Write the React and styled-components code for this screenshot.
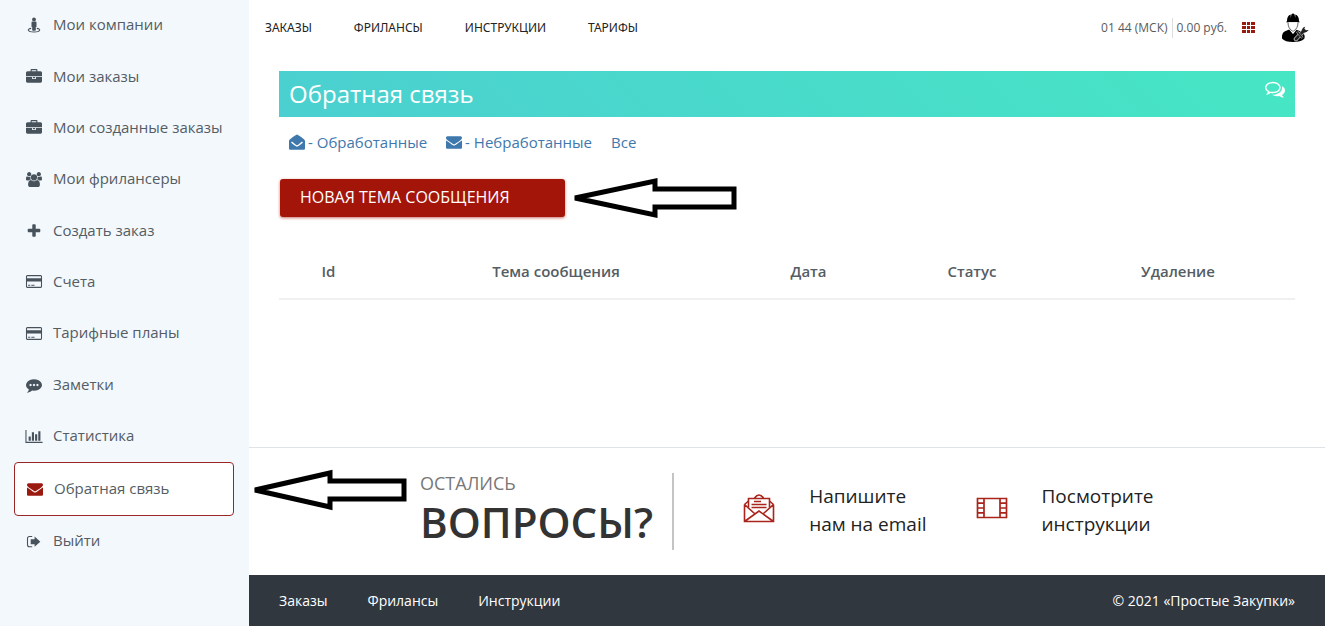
import styled, { createGlobalStyle, css } from "styled-components"

const GlobalStyle = createGlobalStyle`
  * {
    box-sizing: border-box;
  }
  body {
    margin: 0;
    background: #fff;
    color: #545d64;
    font-family: "Open Sans", "Noto Sans", sans-serif;
    font-size: 15px;
    line-height: 20px;
  }
  a {
    color: inherit;
    text-decoration: none;
  }
  ul {
    list-style: none;
    margin: 0;
    padding: 0;
  }
`

const Page = styled.div`
  display: flex;
  min-height: 100vh;
`

const Sidebar = styled.nav`
  flex: 0 0 249px;
  display: flex;
  flex-direction: column;
  padding: 0 15px 59px 14px;
  background: #f3f8fd;
`
const SideList = styled.ul`
  flex: 1;
  display: flex;
  flex-direction: column;
`
const SideItem = styled.li`
  flex: 1 0 51px;
  display: flex;
  ${({ $active }) => $active && css`flex-basis: 53px;`}
`
const SideLink = styled.a`
  flex: 1;
  display: flex;
  align-items: center;
  gap: 9px;
  padding: 0 10px 3px;
  svg {
    flex: 0 0 20px;
    margin-top: 2px;
    fill: #47525b;
  }
  ${({ $active }) => $active && css`
    padding-bottom: 2px;
    background: #fff;
    border: 1px solid #9a2626;
    border-radius: 4px;
    svg {
      fill: #9b1a10;
    }
  `}
`

const Content = styled.div`
  flex: 1;
  min-width: 0;
  display: flex;
  flex-direction: column;
`

const Header = styled.header`
  display: flex;
  align-items: center;
  justify-content: space-between;
  height: 55px;
  padding: 0 16px;
  color: #222;
  font-size: 12px;
`
const TopMenu = styled.ul`
  display: flex;
  gap: 42px;
  font-family: "Noto Sans", sans-serif;
  text-transform: uppercase;
`
const UserBar = styled.div`
  display: flex;
  align-items: center;
  color: #5a5a5a;
`
const Balance = styled.span`
  margin-left: 4px;
  padding-left: 4px;
  border-left: 1px solid #ddd;
`
const IconButton = styled.button`
  display: flex;
  margin: 0;
  padding: 0;
  border: 0;
  background: none;
  cursor: pointer;
`
const GridButton = styled(IconButton)`
  margin: 0 26px 0 15px;
`

const Main = styled.main`
  flex: 1;
  padding: 16px 30px;
`
const TitleBar = styled.div`
  display: flex;
  align-items: flex-start;
  justify-content: space-between;
  padding: 8px 10px;
  background: linear-gradient(45deg, #4bcfd0, #46e6c4);
  color: #fff;
`
const Title = styled.h1`
  margin: 0;
  font-size: 24px;
  line-height: 30px;
  font-weight: 400;
`
const Filters = styled.div`
  display: flex;
  gap: 19px;
  padding: 15px 10px 16px;
  color: #3f78ac;
`
const FilterLink = styled.a`
  display: flex;
  align-items: center;
  gap: 3px;
`
const ActionRow = styled.div`
  display: flex;
  align-items: center;
  gap: 8px;
  padding: 9px 1px 0;
`
const NewTopic = styled.button`
  width: 285px;
  height: 38px;
  padding: 0 20px 2px;
  border: 0;
  border-radius: 3px;
  background: #a31509;
  box-shadow: 0 1px 3px rgba(163, 21, 9, 0.6);
  color: #fff;
  font: 500 16px/20px "Open Sans", "Noto Sans", sans-serif;
  text-align: left;
  text-transform: uppercase;
  cursor: pointer;
`

const Table = styled.table`
  width: 100%;
  margin-top: 25px;
  border-collapse: collapse;
  table-layout: fixed;
`
const Th = styled.th`
  width: ${({ $width }) => $width || "auto"};
  padding: 17px 0;
  border-bottom: 2px solid #f0f0f0;
  font-weight: 600;
`

const Questions = styled.section`
  display: flex;
  align-items: center;
  height: 128px;
  padding: 21px 4px 25px;
  border-top: 1px solid #dfe3e6;
`
const QuestionTitle = styled.h2`
  display: flex;
  flex-direction: column;
  margin: 0 0 0 13px;
  padding-bottom: 4px;
  color: #333;
  font-size: 42px;
  line-height: 50px;
  font-weight: 600;
  small {
    color: #777;
    font-size: 18px;
    line-height: 28px;
    font-weight: 400;
  }
`
const Divider = styled.div`
  align-self: flex-end;
  width: 2px;
  height: 77px;
  margin: 0 69px 0 19px;
  background: #c4c4c4;
`
const HelpLink = styled.a`
  display: flex;
  align-items: center;
  gap: 34px;
  margin-right: 49px;
  color: #222;
  font-size: 19px;
  line-height: 28px;
  svg {
    margin-bottom: 3px;
  }
`
const PageArrow = styled.svg`
  flex: none;
  ${({ $top }) => $top && css`align-self: flex-start;`}
`

const Footer = styled.footer`
  display: flex;
  align-items: center;
  justify-content: space-between;
  height: 51px;
  padding: 0 30px;
  background: #31373f;
  color: #fff;
  font-size: 14px;
`
const FooterMenu = styled.ul`
  display: flex;
  gap: 40px;
`

const ICONS = {
  briefcase: [1792, "M640 256h512v-128h-512v128zm1152 640v480q0 66-47 113t-113 47h-1472q-66 0-113-47t-47-113v-480h672v160q0 26 19 45t45 19h320q26 0 45-19t19-45v-160h672zm-768 0v128h-256v-128h256zm768-480v384h-1792v-384q0-66 47-113t113-47h352v-160q0-40 28-68t68-28h576q40 0 68 28t28 68v160h352q66 0 113 47t47 113z"],
  group: [1920, "M593 896q-162 5-265 128h-134q-82 0-138-40.5t-56-118.5q0-353 124-353 6 0 43.5 21t97.5 42.5 119 21.5q67 0 133-23-5 37-5 66 0 139 81 256zm1071 637q0 120-73 189.5t-194 69.5h-874q-121 0-194-69.5t-73-189.5q0-53 3.5-103.5t14-109 26.5-108.5 43-97.5 62-81 85.5-53.5 111.5-20q10 0 43 21.5t73 48 107 48 135 21.5 135-21.5 107-48 73-48 43-21.5q61 0 111.5 20t85.5 53.5 62 81 43 97.5 26.5 108.5 14 109 3.5 103.5zm-1024-1277q0 106-75 181t-181 75-181-75-75-181 75-181 181-75 181 75 75 181zm704 384q0 159-112.5 271.5t-271.5 112.5-271.5-112.5-112.5-271.5 112.5-271.5 271.5-112.5 271.5 112.5 112.5 271.5zm576 225q0 78-56 118.5t-138 40.5h-134q-103-123-265-128 81-117 81-256 0-29-5-66 66 23 133 23 59 0 119-21.5t97.5-42.5 43.5-21q124 0 124 353zm-128-609q0 106-75 181t-181 75-181-75-75-181 75-181 181-75 181 75 75 181z"],
  plus: [1792, "M1600 736v192q0 40-28 68t-68 28h-416v416q0 40-28 68t-68 28h-192q-40 0-68-28t-28-68v-416h-416q-40 0-68-28t-28-68v-192q0-40 28-68t68-28h416v-416q0-40 28-68t68-28h192q40 0 68 28t28 68v416h416q40 0 68 28t28 68z"],
  card: [1920, "M1760 128q66 0 113 47t47 113v1216q0 66-47 113t-113 47h-1600q-66 0-113-47t-47-113v-1216q0-66 47-113t113-47h1600zm-1600 128q-13 0-22.5 9.5t-9.5 22.5v224h1664v-224q0-13-9.5-22.5t-22.5-9.5h-1600zm1600 1280q13 0 22.5-9.5t9.5-22.5v-608h-1664v608q0 13 9.5 22.5t22.5 9.5h1600zm-1504-128v-128h256v128h-256zm384 0v-128h384v128h-384z"],
  comment: [1792, "M640 896q0-53-37.5-90.5t-90.5-37.5-90.5 37.5-37.5 90.5 37.5 90.5 90.5 37.5 90.5-37.5 37.5-90.5zm384 0q0-53-37.5-90.5t-90.5-37.5-90.5 37.5-37.5 90.5 37.5 90.5 90.5 37.5 90.5-37.5 37.5-90.5zm384 0q0-53-37.5-90.5t-90.5-37.5-90.5 37.5-37.5 90.5 37.5 90.5 90.5 37.5 90.5-37.5 37.5-90.5zm384 0q0 174-120 321.5t-326 233-450 85.5q-110 0-211-18-173 173-435 229-52 10-86 13-12 1-22-6t-13-18q-4-15 20-37 5-5 23.5-21.5t25.5-23.5 23.5-25.5 24-31.5 20.5-37 20-48 14.5-57.5 12.5-72.5q-146-90-229.5-216.5t-83.5-269.5q0-174 120-321.5t326-233 450-85.5 450 85.5 326 233 120 321.5z"],
  chart: [2048, "M640 896v512h-256v-512h256zm384-512v1024h-256v-1024h256zm1024 1152v128h-2048v-1536h128v1408h1920zm-640-896v768h-256v-768h256zm384-384v1152h-256v-1152h256z"],
  envelope: [1792, "M1792 710v794q0 66-47 113t-113 47h-1472q-66 0-113-47t-47-113v-794q44 49 101 87 362 246 497 345 57 42 92.5 65.5t94.5 48 110 24.5h2q51 0 110-24.5t94.5-48 92.5-65.5q170-123 498-345 57-39 100-87zm0-294q0 79-49 151t-122 123q-376 261-468 325-10 7-42.5 31t-54 38.5-52 32.5-57.5 27-50 9h-2q-23 0-50-9t-57.5-27-52-32.5-54-38.5-42.5-31q-91-64-262-182.5t-205-142.5q-62-42-117-115.5t-55-136.5q0-78 41.5-130t118.5-52h1472q65 0 112.5 47t47.5 113z"],
  comments: [1792, "M704 384q-153 0-286 52t-211.5 141-78.5 191q0 82 53 158t149 132l97 56-35 84q34-20 62-39l44-31 53 10q78 14 153 14 153 0 286-52t211.5-141 78.5-191-78.5-191-211.5-141-286-52zm0-128q191 0 353.5 68.5t256.5 186.5 94 257-94 257-256.5 186.5-353.5 68.5q-86 0-176-16-124 88-278 128-36 9-86 16h-3q-11 0-20.5-8t-11.5-21q-1-3-1-6.5t.5-6.5 2-6l2.5-5 3.5-5.5 4-5 4.5-5 4-4.5q5-6 23-25t26-29.5 22.5-29 25-38.5 20.5-44q-124-72-195-177t-71-224q0-139 94-257t256.5-186.5 353.5-68.5zm822 1169q10 24 20.5 44t25 38.5 22.5 29 26 29.5 23 25q1 1 4 4.5t4.5 5 4 5 3.5 5.5l2.5 5 2 6 .5 6.5-1 6.5q-3 14-13 22t-22 7q-50-7-86-16-154-40-278-128-90 16-176 16-271 0-472-132 58 4 88 4 161 0 309-45t264-129q125-92 192-212t67-254q0-77-23-152 129 71 204 178t75 230q0 120-71 224.5t-195 176.5z"],
}

const Icon = ({ name, size = 16 }) => {
  const [width, path] = ICONS[name]
  return (
    <svg width={size} height={size} viewBox={`0 0 ${width} 1792`} fill="currentColor" aria-hidden="true">
      <path d={path} />
    </svg>
  )
}

const StreetIcon = () => (
  <svg width="16" height="16" viewBox="0 0 16 16" aria-hidden="true">
    <circle cx="8" cy="2.4" r="1.9" />
    <path d="M6.5 4.5h3q1 0 1 1.1v3.8q0 .7-.7.7v2.9q0 .7-.7.7H6.9q-.7 0-.7-.7v-2.9q-.7 0-.7-.7V5.6q0-1.100 1-1.100z" />
    <path d="M5.200 11.300C1 11.900 1 15 8 15s7-3.100 2.800-3.700" fill="none" stroke="#47525b" strokeWidth="1.200" />
  </svg>
)

const ExitIcon = () => (
  <svg width="16" height="16" viewBox="0 0 16 16" aria-hidden="true">
    <path d="M6.200 3.500H3.500Q1.500 3.500 1.500 5.500v6.300q0 2 2 2h2.700" fill="none" stroke="#47525b" strokeWidth="1.100" />
    <path d="M8.600 3.600v2.600H4.700v5h3.900v2.600l5.700-5.100z" />
  </svg>
)

const OpenEnvelope = () => (
  <svg width="16" height="16" viewBox="0 0 16 16" fill="currentColor" aria-hidden="true">
    <path d="M8 .5q.6 0 2.600 1.500 4.200 2.900 5 3.900.4.400.4 1v7.600q0 1.200-1.300 1.200H1.300Q0 15.700 0 14.500V6.900q0-.6.400-1 .8-1 5-3.900Q7.400.500 8 .500z" />
    <path d="M2.500 8.100q4.200 3.900 5.500 3.900t5.500-3.900" fill="none" stroke="#fff" strokeWidth="1.400" />
  </svg>
)

const GridIcon = () => (
  <svg width="13" height="11" viewBox="0 0 13 11" fill="#9b1a10" aria-hidden="true">
    {[0, 4, 8].map((y) => [0, 5, 9].map((x) => (
      <rect key={`${x}-${y}`} x={x} y={y} width={x === 5 ? 3 : 4} height="3" />
    )))}
  </svg>
)

const Worker = () => (
  <svg width="28" height="29" viewBox="0 0 28 29" fill="none" aria-hidden="true">
    <path d="M6 8Q6 2.500 9.700 1.500V5l.8-3.800Q12-.4 13.500 1.200L14.300 5V1.500Q18 2.500 18 8l.8 1.200H5.200z" fill="#000" />
    <path d="M7 9.300Q6.800 15.500 12 18.500 17.200 15.500 17 9.300" fill="#fff" stroke="#555" strokeWidth=".9" />
    <path d="M1 25.500Q.6 19.500 4 18.200L8.200 16.500 12 21l3.500-4.300 5.800 2.300q3.400 3 2 6.700Q20 29 12 29T1 25.500z" fill="#000" />
    <path d="M9.200 17.200 12 20.600l2.800-3.400L12 19z" fill="#fff" />
    <path d="m15 26 7.500-8" stroke="#aaa" strokeWidth="4.600" strokeLinecap="round" />
    <path d="m15 26 7.500-8" stroke="#222" strokeWidth="2.600" strokeLinecap="round" />
    <path d="m16 18.500 5.500 6.500" stroke="#aaa" strokeWidth="2.600" />
    <path d="m16 18.500 5.500 6.500" stroke="#222" strokeWidth="1.300" />
    <path d="M24.200 13.800q-3.400.8-3.200 4.400 2.800 3 6.800-1.300l-2.900.4-1.600-1.500z" fill="#222" />
  </svg>
)

const LetterIcon = () => (
  <svg width="32" height="30" viewBox="0 0 32 30" fill="none" stroke="#a9251b" strokeWidth="1.600" aria-hidden="true">
    <path d="M1.500 11.500v17h29v-17M1.500 11.500 5.500 8M30.500 11.500l-4-3.500M1.500 11.500l10 9M30.500 11.500l-10 9M1.500 28.500 16 18l14.500 10.500" />
    <path d="M5.500 14.500v-9h21v9M11.500 5Q16-1 20.500 5M11 8.500h7M8.500 11.500h15M8.500 14.500h15" />
  </svg>
)

const FilmIcon = () => (
  <svg width="32" height="22" viewBox="0 0 32 22" fill="none" stroke="#a9251b" strokeWidth="1.700" aria-hidden="true">
    <path d="M1.500 1.500h29v19h-29zM8 1.500v19M24 1.500v19M1.500 6.200H8M1.500 11H8M1.500 15.800H8M24 6.200h6.500M24 11h6.500M24 15.800h6.500" />
  </svg>
)

const Arrow = ({ width, top }) => (
  <PageArrow $top={top} width={width} height="42" viewBox={`0 0 ${width} 42`} aria-hidden="true">
    <path
      d={`M2 21 ${width * 0.5} 4V12H${width - 3}V30H${width * 0.5}V38z`}
      fill="#fff"
      stroke="#000"
      strokeWidth="5"
    />
  </PageArrow>
)

const sideLinks = [
  { text: "Мои компании", icon: <StreetIcon /> },
  { text: "Мои заказы", icon: <Icon name="briefcase" /> },
  { text: "Мои созданные заказы", icon: <Icon name="briefcase" /> },
  { text: "Мои фрилансеры", icon: <Icon name="group" size={15} /> },
  { text: "Создать заказ", icon: <Icon name="plus" /> },
  { text: "Счета", icon: <Icon name="card" size={15} /> },
  { text: "Тарифные планы", icon: <Icon name="card" size={15} /> },
  { text: "Заметки", icon: <Icon name="comment" /> },
  { text: "Статистика", icon: <Icon name="chart" size={15} /> },
  { text: "Обратная связь", icon: <Icon name="envelope" />, active: true },
  { text: "Выйти", icon: <ExitIcon /> },
]

const topLinks = ["Заказы", "Фрилансы", "Инструкции", "Тарифы"]
const footerLinks = ["Заказы", "Фрилансы", "Инструкции"]

const columns = [
  { text: "Id", width: "99px" },
  { text: "Тема сообщения", width: "356px" },
  { text: "Дата", width: "149px" },
  { text: "Статус", width: "178px" },
  { text: "Удаление" },
]

const App = () => {
  return (
    <>
      <GlobalStyle />
      <Page>
        <Sidebar>
          <SideList>
            {sideLinks.map(({ text, icon, active }) => (
              <SideItem key={text} $active={active}>
                <SideLink href="#" $active={active}>{icon}{text}</SideLink>
              </SideItem>
            ))}
          </SideList>
        </Sidebar>
        <Content>
          <Header>
            <TopMenu>
              {topLinks.map((text) => <li key={text}><a href="#">{text}</a></li>)}
            </TopMenu>
            <UserBar>
              <span>01 44 (МСК)</span>
              <Balance>0.00 руб.</Balance>
              <GridButton type="button" aria-label="Меню"><GridIcon /></GridButton>
              <IconButton type="button" aria-label="Профиль"><Worker /></IconButton>
            </UserBar>
          </Header>
          <Main>
            <TitleBar>
              <Title>Обратная связь</Title>
              <Icon name="comments" size={20} />
            </TitleBar>
            <Filters>
              <FilterLink href="#"><OpenEnvelope />- Обработанные</FilterLink>
              <FilterLink href="#"><Icon name="envelope" />- Небработанные</FilterLink>
              <FilterLink href="#">Все</FilterLink>
            </Filters>
            <ActionRow>
              <NewTopic type="button">Новая тема сообщения</NewTopic>
              <Arrow width={164} />
            </ActionRow>
            <Table>
              <thead>
                <tr>
                  {columns.map(({ text, width }) => <Th key={text} scope="col" $width={width}>{text}</Th>)}
                </tr>
              </thead>
            </Table>
          </Main>
          <Questions>
            <Arrow width={154} top />
            <QuestionTitle><small>ОСТАЛИСЬ</small>ВОПРОСЫ?</QuestionTitle>
            <Divider />
            <HelpLink href="#">
              <LetterIcon />
              <span>Напишите<br />нам на email</span>
            </HelpLink>
            <HelpLink href="#">
              <FilmIcon />
              <span>Посмотрите<br />инструкции</span>
            </HelpLink>
          </Questions>
          <Footer>
            <FooterMenu>
              {footerLinks.map((text) => <li key={text}><a href="#">{text}</a></li>)}
            </FooterMenu>
            <span>© 2021 «Простые Закупки»</span>
          </Footer>
        </Content>
      </Page>
    </>
  )
}

export default App
